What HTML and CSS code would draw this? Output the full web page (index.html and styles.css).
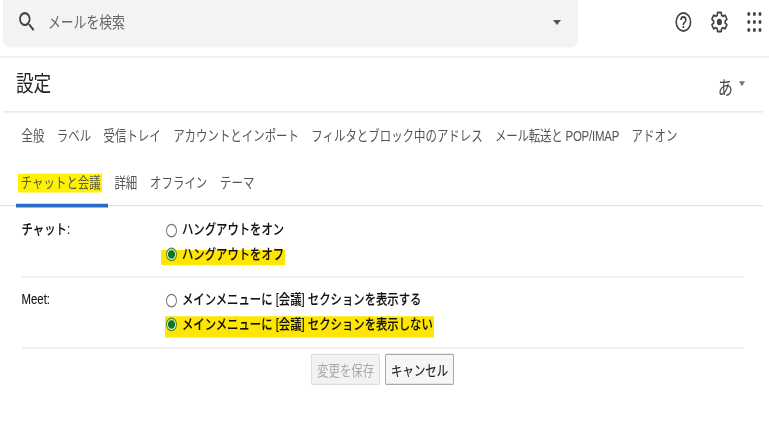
FILE: index.html
```html
<!DOCTYPE html>
<html lang="ja">
<head>
<meta charset="utf-8">
<title>設定</title>
<link rel="stylesheet" href="styles.css">
</head>
<body>
<div class="page">
  <header class="topbar">
    <div class="search">
      <svg class="search-icon" viewBox="0 0 24 24"><path d="M15.5 14h-.79l-.28-.27C15.41 12.59 16 11.11 16 9.5 16 5.91 13.09 3 9.5 3S3 5.91 3 9.5 5.91 16 9.5 16c1.61 0 3.09-.59 4.23-1.57l.27.28v.79l5 4.99L20.49 19l-4.99-5zm-6 0C7.01 14 5 11.99 5 9.5S7.01 5 9.5 5 14 7.01 14 9.5 11.99 14 9.5 14z"/></svg>
      <span class="search-text">メールを検索</span>
      <span class="search-caret"></span>
    </div>
    <div class="top-icons">
      <svg class="icon" viewBox="0 0 24 24"><path d="M11 18h2v-2h-2v2zm1-16a10 10 0 1 0 0 20 10 10 0 0 0 0-20zm0 18a8 8 0 1 1 0-16 8 8 0 0 1 0 16zm0-14a4 4 0 0 0-4 4h2a2 2 0 1 1 4 0c0 2-3 1.75-3 5h2c0-2.25 3-2.5 3-5a4 4 0 0 0-4-4z"/></svg>
      <svg class="icon" viewBox="0 0 24 24"><path class="gear" d="M19.14 12.94c.04-.3.06-.61.06-.94 0-.32-.02-.64-.07-.94l2.03-1.58c.18-.14.23-.41.12-.61l-1.92-3.32c-.12-.22-.37-.29-.59-.22l-2.39.96c-.5-.38-1.03-.7-1.62-.94l-.36-2.54c-.04-.24-.24-.41-.48-.41h-3.84c-.24 0-.43.17-.47.41l-.36 2.54c-.59.24-1.13.57-1.62.94l-2.39-.96c-.22-.08-.47 0-.59.22L2.74 8.87c-.12.21-.08.47.12.61l2.03 1.58c-.05.3-.09.63-.09.94s.02.64.07.94l-2.03 1.58c-.18.14-.23.41-.12.61l1.92 3.32c.12.22.37.29.59.22l2.39-.96c.5.38 1.03.7 1.62.94l.36 2.54c.05.24.24.41.48.41h3.84c.24 0 .44-.17.47-.41l.36-2.54c.59-.24 1.13-.56 1.62-.94l2.39.96c.22.08.47 0 .59-.22l1.92-3.32c.12-.22.07-.47-.12-.61l-2.01-1.58z"/><circle cx="12" cy="12" r="3.2"/></svg>
      <svg class="icon" viewBox="0 0 24 24"><circle cx="5" cy="4" r="1.9"/><circle cx="12" cy="4" r="1.9"/><circle cx="19" cy="4" r="1.9"/><circle cx="5" cy="12" r="1.9"/><circle cx="12" cy="12" r="1.9"/><circle cx="19" cy="12" r="1.9"/><circle cx="5" cy="20" r="1.9"/><circle cx="12" cy="20" r="1.9"/><circle cx="19" cy="20" r="1.9"/></svg>
    </div>
  </header>

  <div class="title-row">
    <h1 class="title">設定</h1>
    <div class="lang">あ<span class="lang-caret"></span></div>
  </div>

  <nav class="tabs">
    <div class="tab-row first">
      <a class="tab">全般</a><a class="tab">ラベル</a><a class="tab">受信トレイ</a><a class="tab">アカウントとインポート</a><a class="tab">フィルタとブロック中のアドレス</a><a class="tab tight">メール転送と POP/IMAP</a><a class="tab">アドオン</a>
    </div>
    <div class="tab-row second">
      <a class="tab active"><span class="tab-mark">チャットと会議</span></a><a class="tab">詳細</a><a class="tab">オフライン</a><a class="tab">テーマ</a>
    </div>
  </nav>

  <section class="settings">
    <div class="row">
      <div class="row-label">チャット:</div>
      <div class="options">
        <label class="option"><input class="radio" type="radio" name="chat"><span>ハングアウトをオン</span></label>
        <label class="option marked"><input class="radio" type="radio" name="chat" checked><span>ハングアウトをオフ</span></label>
      </div>
    </div>
    <div class="row meet">
      <div class="row-label">Meet:</div>
      <div class="options">
        <label class="option"><input class="radio" type="radio" name="meet"><span>メインメニューに [会議] セクションを表示する</span></label>
        <label class="option marked tall"><input class="radio" type="radio" name="meet" checked><span>メインメニューに [会議] セクションを表示しない</span></label>
      </div>
    </div>
    <div class="actions">
      <button class="btn disabled" type="button">変更を保存</button>
      <button class="btn" type="button">キャンセル</button>
    </div>
  </section>
</div>
</body>
</html>
```

FILE: styles.css
```css
html, body {
  margin: 0;
  padding: 0;
  width: 769px;
  height: 432px;
  overflow: hidden;
  background: #fff;
}

/* The reference is a horizontally squeezed capture: lay out short, then stretch to full height. */
.page {
  width: 769px;
  height: 345.6px;
  transform: scaleY(1.25);
  transform-origin: 0 0;
  filter: blur(0.35px);
  font-family: "Liberation Sans", "Noto Sans CJK JP", sans-serif;
  color: #222;
  box-sizing: border-box;
}

.topbar {
  height: 45.6px;
  box-sizing: border-box;
  border-bottom: 0.8px solid #e8e8e8;
  display: flex;
  align-items: flex-start;
}

.search {
  margin-left: 3.2px;
  width: 575px;
  height: 38.4px;
  background: #f1f3f4;
  border-radius: 0 0 7px 7px;
  display: flex;
  align-items: center;
  box-sizing: border-box;
  padding: 0 17.6px 3.2px 12px;
}

.search-icon {
  width: 24px;
  height: 20.8px;
  fill: #444;
}

.search-text {
  margin: 0 0 1.6px 8.8px;
  font-size: 12.8px;
  color: #666;
  flex: 1;
}

.search-caret {
  width: 0;
  height: 0;
  border: 4px solid transparent;
  border-top: 4.8px solid #555;
  border-bottom: 0;
}

.top-icons {
  display: flex;
  margin-left: 95.2px;
  gap: 14.4px;
  padding-top: 8px;
}

.icon {
  width: 20.8px;
  height: 19.2px;
  fill: #444;
}

.gear {
  fill: none;
  stroke: #444;
  stroke-width: 2;
}

.title-row {
  height: 44.8px;
  box-sizing: border-box;
  border-bottom: 0.8px solid #e4e4e4;
  margin-right: 6.4px;
  margin-left: 3.2px;
  padding-bottom: 3.2px;
  display: flex;
  align-items: center;
  justify-content: space-between;
}

.title {
  margin: 0 0 0 12.8px;
  font-size: 17.6px;
  font-weight: 400;
  color: #222;
}

.lang {
  display: flex;
  align-items: center;
  font-size: 15.2px;
  color: #444;
  margin-right: 17.4px;
  padding-top: 6.4px;
}

.lang-caret {
  margin-left: 6.2px;
  margin-bottom: 4px;
  width: 0;
  height: 0;
  border: 3.2px solid transparent;
  border-top: 4px solid #777;
  border-bottom: 0;
}

.tabs {
  margin: 0 6.4px 0 0;
  height: 74.4px;
  box-sizing: border-box;
  border-bottom: 0.8px solid #e4e4e4;
  font-size: 11.44px;
  color: #555;
}

.tab-row {
  display: flex;
}

.tab-row.first {
  height: 35.2px;
  padding-left: 21.6px;
  gap: 12.4px;
  align-items: center;
}

.tab.tight {
  letter-spacing: -0.2px;
}

.tab-row.second {
  height: 38.4px;
  padding-left: 16px;
  padding-top: 12px;
  gap: 12.8px;
  align-items: flex-start;
  box-sizing: border-box;
}

.tab-row.second .tab {
  padding-top: 0.8px;
  line-height: 16px;
}

.tab-row.second .tab.active {
  width: 92px;
  height: 28px;
  box-sizing: border-box;
  border-bottom: 3.2px solid #2a6cc4;
  padding: 1.6px 2.4px 0;
  margin-right: -6.4px;
}

.tab-mark {
  display: inline-block;
  vertical-align: top;
  background: #fff200;
  padding: 0 1.2px 0 2.4px;
  height: 14.4px;
  line-height: 14.4px;
  white-space: nowrap;
  color: #555;
}

.settings {
  padding: 0 24.8px 0 21.6px;
  font-size: 11.36px;
  font-weight: 500;
  color: #111;
  -webkit-text-stroke: 0.1px #111;
}

.row {
  display: flex;
  border-bottom: 0.8px solid #e6e6e6;
  height: 56.8px;
  padding-top: 8px;
  box-sizing: border-box;
}

.row.meet {
  height: 57.6px;
  padding-top: 7.2px;
}

.row-label {
  width: 143.2px;
  line-height: 16.8px;
  padding-top: 2.4px;
}

.options {
  display: flex;
  flex-direction: column;
  align-items: flex-start;
}

.option {
  position: relative;
  display: flex;
  align-items: center;
  height: 20px;
  line-height: 16px;
  white-space: nowrap;
}

.marked::before {
  content: "";
  position: absolute;
  z-index: -1;
  top: 7.2px;
  bottom: 0.8px;
  left: -4px;
  right: -0.8px;
  background: #ffe600;
}

.marked.tall::before {
  top: 4px;
  bottom: -1.6px;
  left: 0;
}

.radio {
  appearance: none;
  margin: 3.2px 5.2px 0 0.8px;
  width: 11.2px;
  height: 11.2px;
  border: 0.8px solid #777;
  border-radius: 50%;
  background: #fff;
  box-sizing: border-box;
  flex: none;
}

.radio:checked {
  border-color: #5a8a3a;
  background: radial-gradient(circle, #0a7a1e 0 3.2px, #dfeee0 3.7px);
  margin-top: 1.2px;
}

.actions {
  display: flex;
  justify-content: flex-end;
  gap: 4.8px;
  padding: 4px 290.2px 0 0;
}

.btn {
  font-family: inherit;
  font-size: 11.44px;
  height: 24.8px;
  padding: 0;
  background: #f6f6f6;
  border: 0.8px solid #aaa;
  border-radius: 1.6px;
  color: #222;
  width: 68.8px;
  font-weight: 400;
}

.btn.disabled {
  color: #aaa;
  border-color: #ddd;
  background: #f2f2f2;
  width: 69.6px;
  -webkit-text-stroke: 0;
}
```
